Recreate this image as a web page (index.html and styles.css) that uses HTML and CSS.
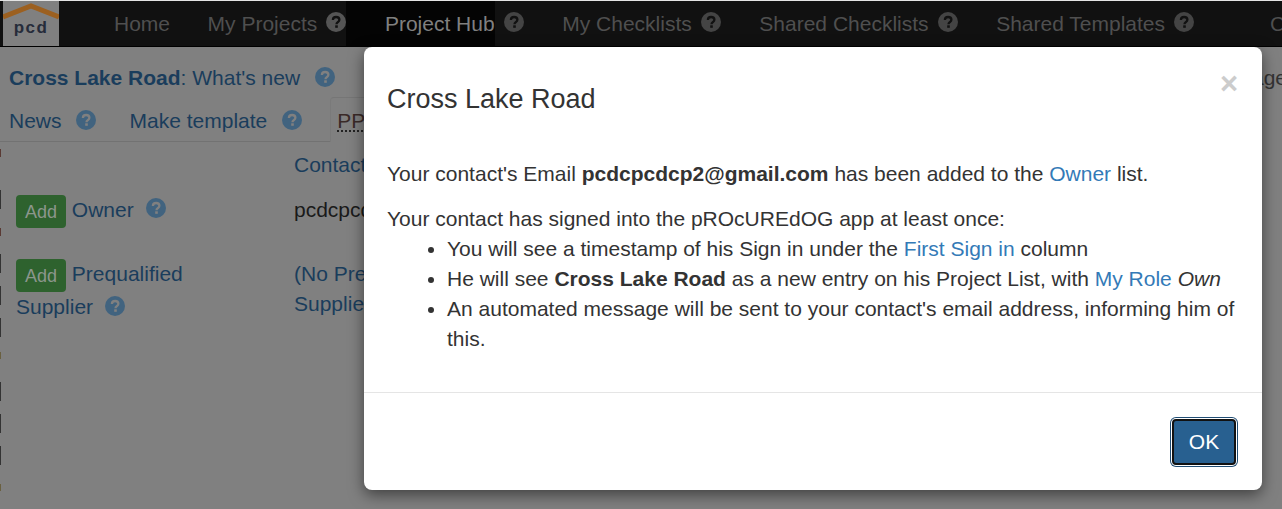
FILE: index.html
```html
<!DOCTYPE html>
<html lang="en">
<head>
<meta charset="utf-8">
<title>Cross Lake Road</title>
<link rel="stylesheet" href="styles.css">
</head>
<body>
<svg width="0" height="0" class="defs" aria-hidden="true">
  <symbol id="help" viewBox="0 0 20 20">
    <circle cx="10" cy="10" r="10" fill="currentColor"/>
    <path d="M6.9 8 C6.9 5.9 8.4 5 10.1 5 C12 5 13.4 6.1 13.4 7.8 C13.4 9.2 12.5 9.7 11.5 10.4 C10.8 10.9 10.5 11.2 10.5 12.2" fill="none" stroke="var(--hole)" stroke-width="2.3"/>
    <rect x="9.2" y="13.3" width="2.6" height="2.5" fill="var(--hole)"/>
  </symbol>
</svg>

<div class="top-line"></div>
<nav class="navbar">
  <div class="logo">
    <svg class="logo-roof" width="56" height="22" viewBox="0 0 56 22"><path d="M0 16 L28 5 L56 16" fill="none" stroke="#9c6020" stroke-width="5"/></svg>
    <span class="logo-text">pcd</span>
  </div>
  <a class="nav-link">Home</a>
  <a class="nav-link">My Projects</a><svg class="help nav-help"><use href="#help"/></svg>
  <a class="nav-link active">Project Hub</a><svg class="help nav-help dim"><use href="#help"/></svg>
  <a class="nav-link">My Checklists</a><svg class="help nav-help dim"><use href="#help"/></svg>
  <a class="nav-link">Shared Checklists</a><svg class="help nav-help dim"><use href="#help"/></svg>
  <a class="nav-link">Shared Templates</a><svg class="help nav-help dim"><use href="#help"/></svg>
  <a class="nav-link nav-last">Contacts</a>
</nav>

<main class="page">
  <div class="heading-row">
    <h1 class="heading"><strong>Cross Lake Road</strong>: What's new</h1>
    <svg class="help page-help"><use href="#help"/></svg>
    <span class="heading-tail">Manage</span>
  </div>
  <div class="tabs">
    <a class="tab">News</a><svg class="help page-help tab-help"><use href="#help"/></svg>
    <a class="tab tab-second">Make template</a><svg class="help page-help tab-help"><use href="#help"/></svg>
    <span class="tab-current"><abbr class="tab-abbr">PPE</abbr></span>
  </div>
  <div class="grid">
    <div></div>
    <div class="col-head">Contact</div>
    <div class="cell first"><button class="add">Add</button> <a class="role raised">Owner</a><svg class="help page-help role-help"><use href="#help"/></svg></div>
    <div class="cell email">pcdcpcdcp2@gmail.com</div>
    <div class="cell first"><button class="add">Add</button> <a class="role raised">Prequalified</a> <a class="role">Supplier</a><svg class="help page-help role-help low"><use href="#help"/></svg></div>
    <div class="cell none"><a class="role">(No Prequalified<br>Suppliers)</a></div>
  </div>
</main>

<svg class="edge" width="1" height="379" viewBox="0 0 1 379" aria-hidden="true">
  <rect y="19" width="1" height="8" fill="#5a3a34"/>
  <rect y="60" width="1" height="19" fill="#333"/>
  <rect y="98" width="1" height="8" fill="#5a3a34"/>
  <rect y="124" width="1" height="19" fill="#333"/>
  <rect y="156" width="1" height="19" fill="#333"/>
  <rect y="188" width="1" height="19" fill="#333"/>
  <rect y="222" width="1" height="7" fill="#6a6040"/>
  <rect y="252" width="1" height="19" fill="#333"/>
  <rect y="284" width="1" height="19" fill="#333"/>
  <rect y="316" width="1" height="19" fill="#333"/>
  <rect y="354" width="1" height="7" fill="#6a6040"/>
</svg>

<section class="modal">
  <header class="modal-header">
    <h2 class="modal-title">Cross Lake Road</h2>
    <span class="close">×</span>
  </header>
  <div class="modal-body">
    <p class="first-para">Your contact's Email <b>pcdcpcdcp2@gmail.com</b> has been added to the <a class="link">Owner</a> list.</p>
    <p>Your contact has signed into the pROcUREdOG app at least once:</p>
    <ul class="list">
      <li>You will see a timestamp of his Sign in under the <a class="link">First Sign in</a> column</li>
      <li>He will see <b>Cross Lake Road</b> as a new entry on his Project List, with <a class="link">My Role</a> <i>Own</i></li>
      <li>An automated message will be sent to your contact's email address, informing him of this.</li>
    </ul>
  </div>
  <footer class="modal-footer">
    <button class="ok">OK</button>
  </footer>
</section>
</body>
</html>
```
FILE: styles.css
```css
* { box-sizing: border-box; }
html, body { margin: 0; padding: 0; }
body {
  width: 1282px;
  height: 509px;
  overflow: hidden;
  position: relative;
  background: #808080;
  font-family: "Liberation Sans", Arial, sans-serif;
  font-size: 21px;
  line-height: 30px;
  color: #1a1a1a;
}
.defs { position: absolute; }
.top-line { height: 1px; background: #e4e4e4; }

.navbar {
  display: flex;
  align-items: center;
  height: 46px;
  overflow: hidden;
  background: #111;
  border-bottom: 1px solid #000;
  white-space: nowrap;
  --hole: #111;
}
.logo {
  flex: none;
  position: relative;
  width: 56px;
  height: 45px;
  margin: 0 17.4px 0 3px;
  background: #808080;
  text-align: center;
}
.logo-roof { position: absolute; left: 0; top: 0; }
.logo-text {
  position: absolute;
  left: 0;
  right: 0;
  top: 12px;
  font-weight: 700;
  font-size: 17px;
  line-height: 30px;
  letter-spacing: 1.5px;
  color: #262c3a;
}
.nav-link {
  display: flex;
  flex: none;
  align-items: center;
  align-self: stretch;
  padding-left: 37.6px;
  color: #4f4f4f;
}
.nav-link.active {
  background: #040404;
  color: #808080;
}
.nav-help + .nav-link { padding-left: 38.6px; }
.nav-help + .nav-link.nav-last { padding-left: 76px; }
.help { flex: none; width: 20px; height: 20px; }
.nav-help { color: #555; margin-left: 9px; margin-top: -4px; }
.nav-help.dim { color: #444; }

.page { --hole: #808080; color: #1a1a1a; }
.help.page-help { color: #41637f; }
.heading-row {
  display: flex;
  align-items: center;
  height: 50px;
  padding: 12px 0 0 9px;
  white-space: nowrap;
  overflow: hidden;
}
.heading {
  margin: 0;
  font-size: 21px;
  font-weight: 400;
  line-height: 30px;
  color: #1a3d5c;
}
.heading-row .help { margin: -3px 0 0 15px; }
.heading-tail { margin-left: 876px; color: #333; }
.tabs {
  display: flex;
  align-items: flex-end;
  height: 45px;
  width: 100%;
  white-space: nowrap;
  overflow: hidden;
  background: linear-gradient(#727272, #727272) 0 100% / 330px 1px no-repeat;
}
.tab {
  height: 44px;
  padding: 8px 0 0 9px;
  color: #1a3d5c;
}
.tab-second { padding-left: 34px; }
.tab-help { align-self: flex-start; margin: 13px 0 0 14px; }
.tab-second + .tab-help { margin-left: 15px; }
.tab-current {
  height: 45px;
  margin-left: 28px;
  padding: 8px 15px 0 6px;
  border: 1px solid #767676;
  border-bottom: 0;
  border-left-color: #7a7a7a;
  border-radius: 4px 4px 0 0;
}
.tab-abbr { color: #3a2a28; text-decoration: underline dotted #222; }

.grid {
  display: grid;
  grid-template-columns: 294px 400px;
  padding-top: 8px;
}
.col-head { color: #1a3d5c; height: 30px; line-height: 30px; }
.cell { min-height: 64px; }
.first { padding: 15px 100px 0 16px; }
.email, .none { padding-top: 15px; }
.add {
  display: inline-block;
  width: 50px;
  height: 33px;
  padding: 0;
  border: 0;
  border-radius: 4px;
  background: #2e622e;
  color: #8c968c;
  font: inherit;
  font-size: 18px;
}
.role { color: #1a3d5c; }
.role.raised { vertical-align: 1px; line-height: 20px; }
.role-help { margin-left: 12px; }
.role-help.low { vertical-align: -2px; }

.edge { position: absolute; left: 0; top: 130px; }

.modal {
  position: absolute;
  left: 364px;
  top: 47px;
  width: 898px;
  height: 443px;
  display: flex;
  flex-direction: column;
  background: #fff;
  border-radius: 8px;
  box-shadow: 0 5px 15px rgba(0, 0, 0, .5);
  color: #333;
}
.modal-header {
  display: flex;
  justify-content: space-between;
  align-items: flex-start;
  height: 112px;
  padding: 33px 24px 0 23px;
}
.modal-title { margin: 0; font-size: 27px; font-weight: 400; line-height: 38px; }
.close {
  font-size: 31px;
  font-weight: 700;
  line-height: 30px;
  margin: -11px 0 0;
  color: #ccc;
}
.modal-body { flex: 1; padding: 0 23px; }
.modal-body p { margin: 0; }
.modal-body .first-para { margin-bottom: 15px; }
.list { margin: 0; padding-left: 60px; }
.link { color: #337ab7; }
.modal-footer {
  display: flex;
  justify-content: flex-end;
  height: 98px;
  padding: 26px 26px 0;
  border-top: 1px solid #e5e5e5;
}
.ok {
  width: 64px;
  height: 46px;
  padding: 0;
  border: 2px solid #111;
  border-radius: 4px;
  background: #286090;
  box-shadow: 0 0 0 1px #fff, 0 0 0 2px #204d74;
  color: #fff;
  font: inherit;
}
```
